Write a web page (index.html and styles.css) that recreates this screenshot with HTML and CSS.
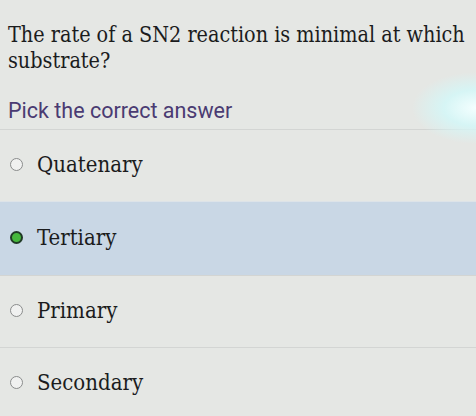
FILE: index.html
```html
<!DOCTYPE html>
<html lang="en">

<head>
    <meta charset="UTF-8">
    <meta name="viewport" content="width=device-width, initial-scale=1.0">
    <title>Quiz - Question</title>
    <link rel="stylesheet" href="styles.css">
</head>

<body>
    <!-- Question -->
    <div class="question">
        <p class="question-text">The rate of a SN2 reaction is minimal at which substrate?</p>
        <p class="hint">Pick the correct answer</p>
    </div>

    <!-- Answers -->
    <ul class="options">
        <li class="option"><span class="radio"></span><span class="label">Quatenary</span></li>
        <li class="option selected"><span class="radio"></span><span class="label">Tertiary</span></li>
        <li class="option"><span class="radio"></span><span class="label">Primary</span></li>
        <li class="option"><span class="radio"></span><span class="label">Secondary</span></li>
    </ul>

    <!-- light from the screen -->
    <div class="glare"></div>
</body>

</html>
```

FILE: styles.css
```css
* {
    box-sizing: border-box;
    margin: 0;
    padding: 0;
}

body {
    background-color: #e5e7e4;
    color: #1b1c1d;
    font-family: "DejaVu Serif Condensed", "DejaVu Serif", serif;
    font-stretch: condensed;
    position: relative;
    overflow: hidden;
    height: 416px;
}

.question {
    padding: 22px 8px 0;
}

.question-text {
    font-size: 21.4px;
    line-height: 26px;
}

.hint {
    font-family: Roboto, "Liberation Sans", sans-serif;
    font-stretch: normal;
    font-size: 21.5px;
    color: #4a3b72;
    margin-top: 22px;
    line-height: 30px;
}

.options {
    list-style: none;
    margin-top: 3px;
}

.option {
    display: flex;
    align-items: center;
    gap: 14px;
    height: 72px;
    padding-left: 10px;
    padding-bottom: 3px;
    border-top: 1px solid #d3d5d3;
    font-size: 22px;
}

.option.selected {
    background-color: #c9d7e5;
    border-top-color: #dde3e8;
    height: 74px;
}

.radio {
    width: 13px;
    height: 13px;
    border-radius: 50%;
    border: 1.5px solid #8a8c8c;
    background-color: #f0f1f0;
    flex-shrink: 0;
}

.option.selected .radio {
    border: 2px solid #203a26;
    background-color: #45b83c;
}

.glare {
    position: absolute;
    top: 72px;
    right: 0;
    width: 64px;
    height: 72px;
    background: radial-gradient(ellipse 64px 36px at 100% 50%, #f4ffff 0%, #d6f5f5 50%, rgba(229, 231, 228, 0) 100%);
}
```
